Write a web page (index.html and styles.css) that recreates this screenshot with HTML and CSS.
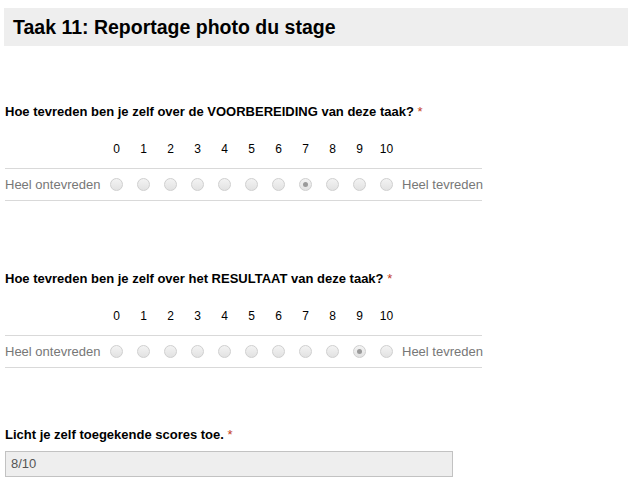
FILE: index.html
```html
<!DOCTYPE html>
<html lang="nl">
<head>
<meta charset="utf-8">
<title>Taak 11</title>
<link rel="stylesheet" href="styles.css">
</head>
<body>
<div class="page">
  <div class="header"><h1 class="title">Taak 11: Reportage photo du stage</h1></div>

  <div class="item q1">
    <div class="qlabel">Hoe tevreden ben je zelf over de VOORBEREIDING van deze taak? <span class="req">*</span></div>
    <div class="scale">
      <div class="nums">
        <span class="cell-label"></span>
        <span class="num">0</span><span class="num">1</span><span class="num">2</span><span class="num">3</span><span class="num">4</span><span class="num">5</span><span class="num">6</span><span class="num">7</span><span class="num">8</span><span class="num">9</span><span class="num">10</span>
        <span></span>
      </div>
      <div class="radios">
        <span class="cell-label left">Heel ontevreden</span>
        <span class="rc"><span class="radio"></span></span><span class="rc"><span class="radio"></span></span><span class="rc"><span class="radio"></span></span><span class="rc"><span class="radio"></span></span><span class="rc"><span class="radio"></span></span><span class="rc"><span class="radio"></span></span><span class="rc"><span class="radio"></span></span><span class="rc"><span class="radio checked"></span></span><span class="rc"><span class="radio"></span></span><span class="rc"><span class="radio"></span></span><span class="rc"><span class="radio"></span></span>
        <span class="cell-label right">Heel tevreden</span>
      </div>
    </div>
  </div>

  <div class="item q2">
    <div class="qlabel">Hoe tevreden ben je zelf over het RESULTAAT van deze taak? <span class="req">*</span></div>
    <div class="scale">
      <div class="nums">
        <span class="cell-label"></span>
        <span class="num">0</span><span class="num">1</span><span class="num">2</span><span class="num">3</span><span class="num">4</span><span class="num">5</span><span class="num">6</span><span class="num">7</span><span class="num">8</span><span class="num">9</span><span class="num">10</span>
        <span></span>
      </div>
      <div class="radios">
        <span class="cell-label left">Heel ontevreden</span>
        <span class="rc"><span class="radio"></span></span><span class="rc"><span class="radio"></span></span><span class="rc"><span class="radio"></span></span><span class="rc"><span class="radio"></span></span><span class="rc"><span class="radio"></span></span><span class="rc"><span class="radio"></span></span><span class="rc"><span class="radio"></span></span><span class="rc"><span class="radio"></span></span><span class="rc"><span class="radio"></span></span><span class="rc"><span class="radio checked"></span></span><span class="rc"><span class="radio"></span></span>
        <span class="cell-label right">Heel tevreden</span>
      </div>
    </div>
  </div>

  <div class="item q3">
    <div class="qlabel">Licht je zelf toegekende scores toe. <span class="req">*</span></div>
    <div class="textbox">8/10</div>
  </div>
</div>
</body>
</html>
```

FILE: styles.css
```css
html, body {
  margin: 0;
  padding: 0;
  background: #fff;
}

body {
  font-family: "Liberation Sans", Arial, sans-serif;
  color: #000;
}

.page {
  padding: 8px 0 0 4px;
}

.header {
  width: 624px;
  height: 38px;
  background: #eeeeee;
  display: flex;
  align-items: center;
  padding-left: 9px;
  box-sizing: border-box;
}

.title {
  margin: 0;
  font-size: 19.5px;
  font-weight: bold;
  line-height: 23px;
  color: #000;
}

.item {
  margin-left: 1px;
}

.q1 {
  margin-top: 58px;
}

.q2 {
  margin-top: 70px;
}

.q3 {
  margin-top: 59px;
}

.qlabel {
  font-size: 13px;
  font-weight: bold;
  line-height: 16px;
  color: #000;
}

.req {
  color: #c43b1d;
  font-weight: normal;
}

.scale {
  width: 477px;
}

.nums,
.radios {
  display: grid;
  grid-template-columns: 98px repeat(11, 27px) 1fr;
}

.nums {
  margin-top: 22px;
  padding-bottom: 12px;
  font-size: 12px;
  line-height: 14px;
  border-bottom: 1px solid #d9d9d9;
}

.num {
  text-align: center;
}

.radios {
  height: 31px;
  align-items: center;
  border-bottom: 1px solid #d9d9d9;
  font-size: 13px;
  color: #777777;
}

.cell-label {
  white-space: nowrap;
}

.cell-label.right {
  padding-left: 2px;
}

.rc {
  display: flex;
  justify-content: center;
  align-items: center;
}

.radio {
  width: 11px;
  height: 11px;
  border-radius: 50%;
  border: 1px solid #cfcfcf;
  background: linear-gradient(#f3f3f3, #e2e2e2);
  display: flex;
  align-items: center;
  justify-content: center;
}

.radio.checked::after {
  content: "";
  width: 5px;
  height: 5px;
  border-radius: 50%;
  background: #9a9a9a;
}

.textbox {
  margin-top: 8px;
  width: 448px;
  height: 26px;
  box-sizing: border-box;
  background: #eeeeee;
  border: 1px solid #c2c2c2;
  padding-left: 5px;
  font-size: 13px;
  line-height: 24px;
  color: #555555;
}
```
